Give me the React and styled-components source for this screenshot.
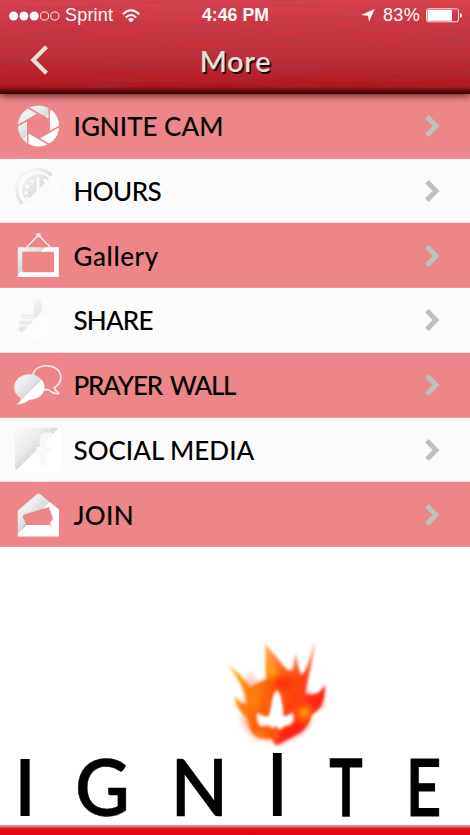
import React from "react";
import styled, { createGlobalStyle } from "styled-components";

const GlobalStyle = createGlobalStyle`
  * { box-sizing: border-box; }
  body { margin: 0; background: #fff; }
`;

const Screen = styled.main`
  width: 470px;
  height: 835px;
  display: flex;
  flex-direction: column;
  overflow: hidden;
  background: #fff;
  font-family: Lato, "Open Sans", sans-serif;
`;

const Header = styled.header`
  position: relative;
  z-index: 1;
  flex: none;
  height: 94px;
  display: flex;
  flex-direction: column;
  background: linear-gradient(#db434d 0, #cc353f 28px, #be2d37 58px, #b51a23 82px, #a5151c 87px, #5c080c 91px, #360406 94px);
  box-shadow: 0 2px 7px rgba(60, 0, 0, 0.75);
`;

const Grain = styled.svg`
  position: absolute;
  inset: 0;
  width: 470px;
  height: 88px;
`;

const StatusBar = styled.div`
  position: relative;
  height: 31px;
  padding: 0 8px 0 9px;
  display: grid;
  grid-template-columns: 1fr auto 1fr;
  align-items: center;
  color: #fff;
  font: 18px/31px "Liberation Sans", Arial, sans-serif;
`;

const StatusGroup = styled.div`
  display: flex;
  align-items: center;
  justify-content: ${(p) => (p.$end ? "flex-end" : "flex-start")};
  svg { display: block; flex: none; }
`;

const Carrier = styled.span`
  margin: 0 9px 0 5px;
  letter-spacing: 0.2px;
`;

const Clock = styled.span`
  font-weight: 700;
  font-size: 17.6px;
  letter-spacing: 0.1px;
`;

const Percent = styled.span`
  margin: 0 6px 0 8px;
  letter-spacing: 0.3px;
`;

const TitleBar = styled.div`
  position: relative;
  flex: 1;
  display: grid;
  grid-template-columns: 70px 1fr 70px;
  padding-bottom: 4px;
  align-items: center;
`;

const BackButton = styled.button`
  width: 70px;
  height: 50px;
  padding: 0 0 2px 30px;
  border: 0;
  background: none;
  display: flex;
  align-items: center;
`;

const Title = styled.h1`
  margin: 0;
  padding-left: 1px;
  text-align: center;
  font-size: 29px;
  line-height: 56px;
  font-weight: 600;
  letter-spacing: 0.7px;
  color: #e9e0d8;
  text-shadow: 1.5px 2px 0 #1c0507;
`;

const Menu = styled.nav`
  flex: none;
  height: 453px;
  display: grid;
  grid-template-rows: repeat(7, 1fr);
`;

const Row = styled.a`
  display: grid;
  grid-template-columns: 48px 1fr 16px;
  align-items: center;
  padding: 1px 30px 0 14px;
  color: #000;
  background: ${(p) => (p.$tinted ? "#ec8689" : "#fbfbfb")};
  border-bottom: 1px solid ${(p) => (p.$tinted ? "#ee9a9d" : "#f3e3e4")};
  svg { display: block; }
`;

const Label = styled.span`
  padding-left: 11.5px;
  font-size: 26px;
  line-height: 32px;
  font-weight: 500;
  white-space: nowrap;
  letter-spacing: ${(p) => p.$spacing}px;
  word-spacing: ${(p) => p.$gap || 0}px;
`;

const Footer = styled.footer`
  flex: 1;
  display: flex;
  flex-direction: column;
  justify-content: flex-end;
`;

const LogoArt = styled.svg`
  display: block;
  width: 470px;
  height: 278px;
  overflow: visible;
`;

const Stripe = styled.div`
  height: 10px;
  background: linear-gradient(#c8b4b4 0, #d77276 1.5px, #e0343b 3px, #e30c15 4px, #df0a14 10px);
`;

const Gloss = "url(#gloss)";

const Aperture = () => (
  <>
    <mask id="blades">
      <circle cx="24.5" cy="24" r="20.6" fill="#fff" />
      <g transform="translate(24.5 24)" stroke="#000" strokeWidth="1.5">
        <path stroke="none" fill="#000" d="M10.4-6V6L0 12-10.4 6V-6L0-12z" />
        {[0, 60, 120, 180, 240, 300].map((a) => (
          <path key={a} d="M10.7 6V-20" transform={`rotate(${a})`} />
        ))}
      </g>
    </mask>
    <rect width="48" height="48" fill={Gloss} mask="url(#blades)" />
  </>
);

const Dial = () => (
  <>
    <circle cx="24" cy="23" r="19.5" fill="none" stroke="#fdfdfd" strokeWidth="3" />
    <path d="M8.3 36.5A20 20 0 0 1 37.5 8.5" fill="none" stroke="url(#soft)" strokeWidth="3.2" />
    <path d="M12.5 34A16 16 0 0 1 35.3 11.6z" fill="url(#soft)" />
    <g fill="#fbfbfb">
      <circle cx="12.2" cy="26" r="1.9" />
      <circle cx="13.2" cy="19.6" r="1.9" />
      <circle cx="18" cy="14.2" r="1.9" />
      <circle cx="31" cy="13.3" r="1.9" />
      <circle cx="13.2" cy="31.2" r="1.6" />
      <path d="M22.5 10h3v15h-3z" />
    </g>
  </>
);

const Frame = () => (
  <>
    <path d="M3.8 15.2H44.8V45.1H3.8zM8.3 19.7V40.3H40V19.7z" fill={Gloss} fillRule="evenodd" />
    <path d="M12.5 15.5L24.5 3 36.5 15.5" fill="none" stroke="#f3eeee" strokeWidth="1.5" />
    <circle cx="24.5" cy="3.3" r="2.3" fill="#f2efef" />
  </>
);

const Thumb = () => (
  <g>
    <path d="M22 23C25 18 28 22 34 18L36 22V36Q35 43 29 43H12L8 36z" fill="#fdfdfd" />
    <path d="M20 19C20 13 19 4 23.5 3.5 28.5 4 28 11 27 16L21 23.2z" fill="url(#thumb)" />
    <rect x="7.4" y="18.3" width="13.5" height="4.6" rx="2.2" fill="#efefef" />
    <path d="M7.2 24.5H19.5L15.8 29H7.2Q4.6 28.5 4.6 26.8 4.8 24.8 7.2 24.5z" fill="#ebebeb" />
    <path d="M7 30.6H14L8.3 36Q5 36 4.8 33.3 5 31 7 30.6z" fill="#e6e6e6" />
  </g>
);

const Bubbles = () => (
  <>
    <path
      d="M19 14C20 7.5 26 4.6 33 4.7 41 5 46.8 9.6 46.8 16.2 46.8 21.6 43.8 24.6 40.3 26.5 41 29 42.4 31 45 32.5 40.5 33 37 31 34.4 28.6L29.5 28.8"
      fill="none" stroke="#fbe9ea" strokeWidth="1.6" strokeLinejoin="round"
    />
    <path d="M15.3 13.3C24 13.3 30.6 19 30.6 26.2S24 38.7 15 38.7C12.7 41.4 8 43.3 2.5 43.2 5.5 41.4 6.5 39.2 6.6 36.8 2.5 34.6.2 31 .2 26.5.2 19 7 13.3 15.3 13.3z" fill={Gloss} />
  </>
);

const Facebook = () => (
  <>
    <rect x="1" y="1.6" width="46.5" height="45" rx="6.5" fill={Gloss} />
    <path d="M25.5 39V27H22V21H25.5V14Q26 6.8 32 6.5H38V12H34.5Q32.3 12.3 32.3 15V21H37.5L36.8 27H32.3V39z" fill="#f8f8f8" />
  </>
);

const Envelope = () => (
  <path
    d="M3.8 19.5L23 3Q24.5 1.8 26 3L45 18.5V45.5H3.8zM8.5 25.5L12 33H35.5L39 27.5 35 16 10 23.5z M12 33L8 37.5 3.8 42.5 12 34H35.5L38.5 37.5 36.2 33z"
    fill={Gloss} fillRule="evenodd"
  />
);

const items = [
  { label: "IGNITE CAM", icon: Aperture, spacing: 0 },
  { label: "HOURS", icon: Dial, spacing: -0.6 },
  { label: "Gallery", icon: Frame, spacing: 0.6 },
  { label: "SHARE", icon: Thumb, spacing: -0.8 },
  { label: "PRAYER WALL", icon: Bubbles, spacing: -1.25, gap: 3 },
  { label: "SOCIAL MEDIA", icon: Facebook, spacing: 0 },
  { label: "JOIN", icon: Envelope, spacing: 0.3 },
];

const Flame = () => (
  <g transform="translate(215 88) scale(.33333)">
    <defs>
      <linearGradient id="fire" x1="0" y1="0" x2="1" y2="0.35">
        <stop offset="0" stopColor="#ffd62e" />
        <stop offset=".28" stopColor="#ff8f12" />
        <stop offset=".55" stopColor="#fd5a0e" />
        <stop offset="1" stopColor="#ff2c14" />
      </linearGradient>
      <linearGradient id="fade" gradientUnits="userSpaceOnUse" x1="0" y1="15" x2="0" y2="130">
        <stop offset="0" stopColor="#fff" stopOpacity=".55" />
        <stop offset="1" stopColor="#fff" />
      </linearGradient>
      <mask id="tips" maskUnits="userSpaceOnUse" x="-20" y="-20" width="420" height="420">
        <path d="M-20-20H400V400H-20z" fill="url(#fade)" />
      </mask>
      <filter id="b3" x="-30%" y="-30%" width="160%" height="160%"><feGaussianBlur stdDeviation="5" /></filter>
      <filter id="b8" x="-50%" y="-50%" width="200%" height="200%"><feGaussianBlur stdDeviation="9" /></filter>
    </defs>
    <g mask="url(#tips)">
      <path d="M100 110L130 145 240 100 290 190 285 260 190 325 110 300 80 265z" fill="#ff5a35" opacity=".4" filter="url(#b8)" />
      <path
        d="M36 86Q78 117 106 155C118 150 132 143 154 132L150 27Q181 58 209 96 222 112 233 104L242 55Q248 95 258 121 280 105 298 18C296 75 280 120 271 176 300 185 321 170 330 148 333 190 320 224 289 240 285 275 255 295 220 310L184 332 170 310C135 314 104 300 101 265 94 233 62 235 60 180 70 202 84 205 96 205 92 168 65 123 36 86z"
        fill="url(#fire)" filter="url(#b3)"
      />
    </g>
    <g filter="url(#b8)">
      <path d="M158 70L185 110 164 132z" fill="#ffb80c" />
      <ellipse cx="205" cy="145" rx="28" ry="20" fill="#fb3410" />
      <ellipse cx="298" cy="203" rx="22" ry="15" fill="#ff2015" />
      <ellipse cx="268" cy="233" rx="15" ry="18" fill="#ffb000" />
      <ellipse cx="122" cy="195" rx="16" ry="30" fill="#ff7d08" />
      <ellipse cx="140" cy="298" rx="26" ry="8" fill="#ff8a15" />
      <path d="M184 325L205 290 280 262 260 288z" fill="#ff0c16" />
    </g>
    <path
      d="M186 166C199 182 201 215 203 244 214 246 224 241 232 234 237 244 236 256 228 266 217 271 206 270 198 280L189 282 183 266 176 280C162 268 150 270 138 274 127 266 125 248 129 234 138 244 150 248 163 244 171 218 172 182 186 166z"
      fill="#fff" stroke="#fff" strokeWidth="3" filter="url(#b3)"
    />
    <path d="M183 162C196 185 199 215 200 258H170C171 215 173 185 183 162z" transform="translate(2 12)" fill="#fff" filter="url(#b3)" />
    <path d="M183 270L191 310H175z" fill="#ff5a20" filter="url(#b3)" />
  </g>
);

const letters = [
  { ch: "I", x: 13.8, size: 78.5, k: 1, stroke: 0 },
  { ch: "G", x: 75, size: 78.5, k: 0.96, stroke: 0.5 },
  { ch: "N", x: 170.5, size: 78.5, k: 0.96, stroke: 0.3 },
  { ch: "I", x: 266.6, size: 86, k: 0.87, stroke: 0 },
  { ch: "T", x: 329.6, size: 78, k: 0.71, stroke: 1.6 },
  { ch: "E", x: 405.8, size: 78, k: 0.79, stroke: 1.2 },
];

const Logo = () => (
  <LogoArt viewBox="0 0 470 278">
    <Flame />
    <g fontFamily="Lato, sans-serif" fontWeight="600" fill="#000" stroke="#000">
      {letters.map(({ ch, x, size, k, stroke }, i) => (
        <text key={i} transform={`translate(${x} 268.8) scale(${k} 1)`} fontSize={size} strokeWidth={stroke}>{ch}</text>
      ))}
    </g>
  </LogoArt>
);

export default function App() {
  return (
    <Screen>
      <GlobalStyle />
      <Header>
        <Grain>
          <defs>
            <filter id="grain" x="0" y="0" width="100%" height="100%">
              <feTurbulence type="fractalNoise" baseFrequency="0.012 0.2" numOctaves="3" seed="7" />
              <feColorMatrix values="0 0 0 0 .3  0 0 0 0 .05  0 0 0 0 .1  .8 0 0 0 -.32" />
            </filter>
            <linearGradient id="gloss" gradientUnits="userSpaceOnUse" x1="0" y1="0" x2="48" y2="48">
              <stop offset=".1" stopColor="#f7f7f7" />
              <stop offset=".32" stopColor="#ededed" />
              <stop offset=".485" stopColor="#d9d9d9" />
              <stop offset=".49" stopColor="#fff" />
            </linearGradient>
            <linearGradient id="soft" gradientUnits="userSpaceOnUse" x1="0" y1="0" x2="48" y2="48">
              <stop offset=".2" stopColor="#f5f5f5" />
              <stop offset=".48" stopColor="#dedede" />
            </linearGradient>
            <linearGradient id="thumb" gradientUnits="userSpaceOnUse" x1="0" y1="0" x2="48" y2="48">
              <stop offset=".28" stopColor="#f4f4f4" />
              <stop offset=".48" stopColor="#e4e4e4" />
            </linearGradient>
          </defs>
          <rect width="470" height="88" filter="url(#grain)" />
        </Grain>
        <StatusBar>
          <StatusGroup>
            <svg width="51" height="10" viewBox="0 0 51 10" fill="#fff">
              <circle cx="4.6" cy="5" r="4.5" />
              <circle cx="14.9" cy="5" r="4.5" />
              <circle cx="25.2" cy="5" r="4.5" />
              <g fill="none" stroke="#fff" strokeWidth=".9">
                <circle cx="35.5" cy="5" r="4.1" />
                <circle cx="45.8" cy="5" r="4.1" />
              </g>
            </svg>
            <Carrier>Sprint</Carrier>
            <svg width="18" height="14" viewBox="0 0 18 14" fill="none" stroke="#fff" strokeWidth="2">
              <path d="M.8 5.3Q9-2.8 17.2 5.3M3.8 8.5Q9 3.6 14.2 8.5" />
              <path d="M9 13.5L6 10.4Q9 7.8 12 10.4z" fill="#fff" stroke="none" />
            </svg>
          </StatusGroup>
          <Clock>4:46 PM</Clock>
          <StatusGroup $end>
            <svg width="14" height="13" viewBox="0 0 14 13"><path d="M13.7 0L8 12.8 7 6.8.2 6z" fill="#fff" /></svg>
            <Percent>83%</Percent>
            <svg width="36" height="15" viewBox="0 0 36 15">
              <rect x=".5" y=".8" width="32" height="13" rx="2" fill="none" stroke="#fff" strokeOpacity=".85" />
              <path d="M1.5 1.8H26V12.8H1.5z" fill="#fff" />
              <path d="M34 5Q36 5.5 36 7.4T34 9.8z" fill="#fff" />
            </svg>
          </StatusGroup>
        </StatusBar>
        <TitleBar>
          <BackButton aria-label="Back">
            <svg width="19" height="30" viewBox="0 0 19 30">
              <path d="M16.5 1.8L3.3 15 16.5 28.2" fill="none" stroke="#e9e0d8" strokeWidth="4.2" />
            </svg>
          </BackButton>
          <Title>More</Title>
        </TitleBar>
      </Header>
      <Menu>
        {items.map(({ label, icon: Icon, spacing, gap }, i) => (
          <Row key={label} $tinted={i % 2 === 0}>
            <svg width="48" height="48" viewBox="0 0 48 48"><Icon /></svg>
            <Label $spacing={spacing} $gap={gap}>{label}</Label>
            <svg width="16" height="24" viewBox="0 0 16 24">
              <path d="M2.9 2.7L12 12 2.9 21.3" fill="none" stroke="#bfbfbf" strokeWidth="5" />
            </svg>
          </Row>
        ))}
      </Menu>
      <Footer>
        <Logo />
        <Stripe />
      </Footer>
    </Screen>
  );
}
